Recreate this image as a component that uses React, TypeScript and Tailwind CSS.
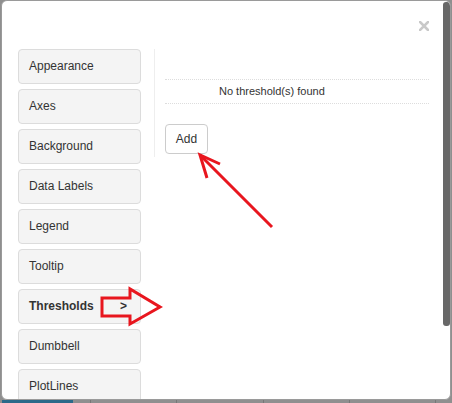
import React from 'react';

const tabs = ['Appearance', 'Axes', 'Background', 'Data Labels', 'Legend', 'Tooltip', 'Thresholds', 'Dumbbell', 'PlotLines'];

export default function App() {
  return (
    <div className="relative h-[403px] w-[452px] overflow-hidden bg-[#8f8f8f] font-['Liberation_Sans',Arial,sans-serif]">
      <div className="relative ml-px h-[400px] w-[450px] overflow-hidden rounded-[6px] border border-[#9a9a9a] bg-white">
        {/* header */}
        <div className="flex h-[48px] items-start justify-end pr-[21px] pt-[20px]">
          <svg width="10" height="10" viewBox="0 0 10 10">
            <path d="M1 1 L9 9 M9 1 L1 9" stroke="#c9c9c9" strokeWidth="2.6" strokeLinecap="square" />
          </svg>
        </div>

        <div className="flex items-start pl-[16px]">
          <div className="flex w-[123px] shrink-0 flex-col gap-[5px]">
            {tabs.map((t) => (
              <div
                key={t}
                className={`flex h-[35px] items-center justify-between rounded-[4px] border border-[#dcdcdc] bg-[#f4f4f4] pb-px pl-[10px] pr-[13px] text-[12px] text-[#333] ${
                  t === 'Thresholds' ? 'font-bold' : ''
                }`}
              >
                <span>{t}</span>
                {t === 'Thresholds' && <span>&gt;</span>}
              </div>
            ))}
          </div>

          <div className="ml-[13px] w-[275px] border-l border-[#eeeeee] pb-[3px] pl-[10px] pt-[30px]">
            <div className="flex h-[25px] w-[264px] items-center border-y border-dotted border-[#dddddd] pl-[54px] text-[11px] text-[#333]">
              No threshold(s) found
            </div>
            <button className="mt-[20px] h-[30px] w-[43px] rounded-[4px] border border-[#cccccc] bg-white text-[12px] text-[#333]">
              Add
            </button>
          </div>
        </div>

        {/* scrollbar */}
        <div className="absolute right-0 top-px h-[324px] w-[7px] rounded-[3px] bg-[#686868]" />
      </div>

      {/* page behind the modal */}
      <div className="flex h-[3px]">
        <div className="ml-[2px] w-[71px] bg-[#2b6a8a]" />
        <div className="ml-[17px] w-[86px] border-l border-[#777]" />
        <div className="w-[87px] border-l border-[#777]" />
        <div className="w-[86px] border-l border-[#777]" />
        <div className="w-[86px] border-l border-[#777]" />
        <div className="border-l border-[#777]" />
      </div>

      {/* red annotations */}
      <svg className="pointer-events-none absolute left-0 top-0" width="452" height="403">
        <g stroke="#e8161e" strokeWidth="3" fill="none" strokeLinejoin="miter">
          <path d="M272 227 L200 155" />
          <path d="M220 164 L200 155 L207 178" />
          <path d="M102 298 L130 298 L130 289 L160 307 L130 324 L130 316 L102 316 Z" />
        </g>
      </svg>
    </div>
  );
}
